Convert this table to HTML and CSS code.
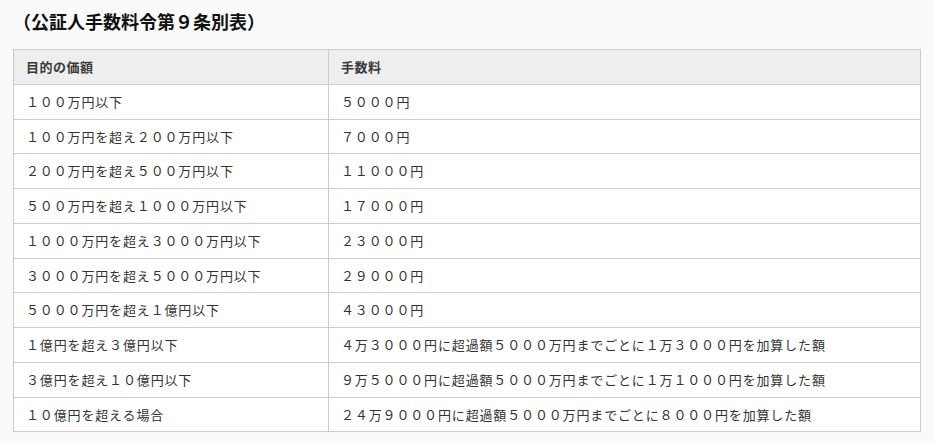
FILE: index.html
```html
<!DOCTYPE html>
<html lang="ja">
<head>
<meta charset="utf-8">
<link rel="stylesheet" href="styles.css">
</head>
<body>
<div class="page">
  <h3 class="title">（公証人手数料令第９条別表）</h3>
  <table class="fees">
    <thead>
      <tr><th class="c1">目的の価額</th><th>手数料</th></tr>
    </thead>
    <tbody>
      <tr><td>１００万円以下</td><td>５０００円</td></tr>
      <tr><td>１００万円を超え２００万円以下</td><td>７０００円</td></tr>
      <tr><td>２００万円を超え５００万円以下</td><td>１１０００円</td></tr>
      <tr><td>５００万円を超え１０００万円以下</td><td>１７０００円</td></tr>
      <tr><td>１０００万円を超え３０００万円以下</td><td>２３０００円</td></tr>
      <tr><td>３０００万円を超え５０００万円以下</td><td>２９０００円</td></tr>
      <tr><td>５０００万円を超え１億円以下</td><td>４３０００円</td></tr>
      <tr><td>１億円を超え３億円以下</td><td>４万３０００円に超過額５０００万円までごとに１万３０００円を加算した額</td></tr>
      <tr><td>３億円を超え１０億円以下</td><td>９万５０００円に超過額５０００万円までごとに１万１０００円を加算した額</td></tr>
      <tr><td>１０億円を超える場合</td><td>２４万９０００円に超過額５０００万円までごとに８０００円を加算した額</td></tr>
    </tbody>
  </table>
</div>
</body>
</html>
```
FILE: styles.css
```css
html, body {
  margin: 0;
  padding: 0;
  background: #fafafa;
}
body {
  font-family: "Noto Sans CJK JP", "Noto Sans", sans-serif;
  color: #333;
}
.page {
  padding: 9px 14px 0 13px;
}
.title {
  margin: 0 0 16px 0;
  font-size: 18px;
  line-height: 24px;
  font-weight: bold;
  color: #111;
}
.fees {
  width: 908px;
  border-collapse: collapse;
  background: #fff;
  font-size: 13px;
  line-height: 17.75px;
}
.fees th, .fees td {
  border: 1px solid #ccc;
  padding: 8px 12px 8px 12px;
  text-align: left;
  vertical-align: middle;
}
.fees th {
  background: #eee;
  font-weight: bold;
  color: #3a3a3a;
  letter-spacing: 0.5px;
}
.fees .c1 {
  width: 290px;
}
.fees td {
  letter-spacing: 0.85px;
}
```
